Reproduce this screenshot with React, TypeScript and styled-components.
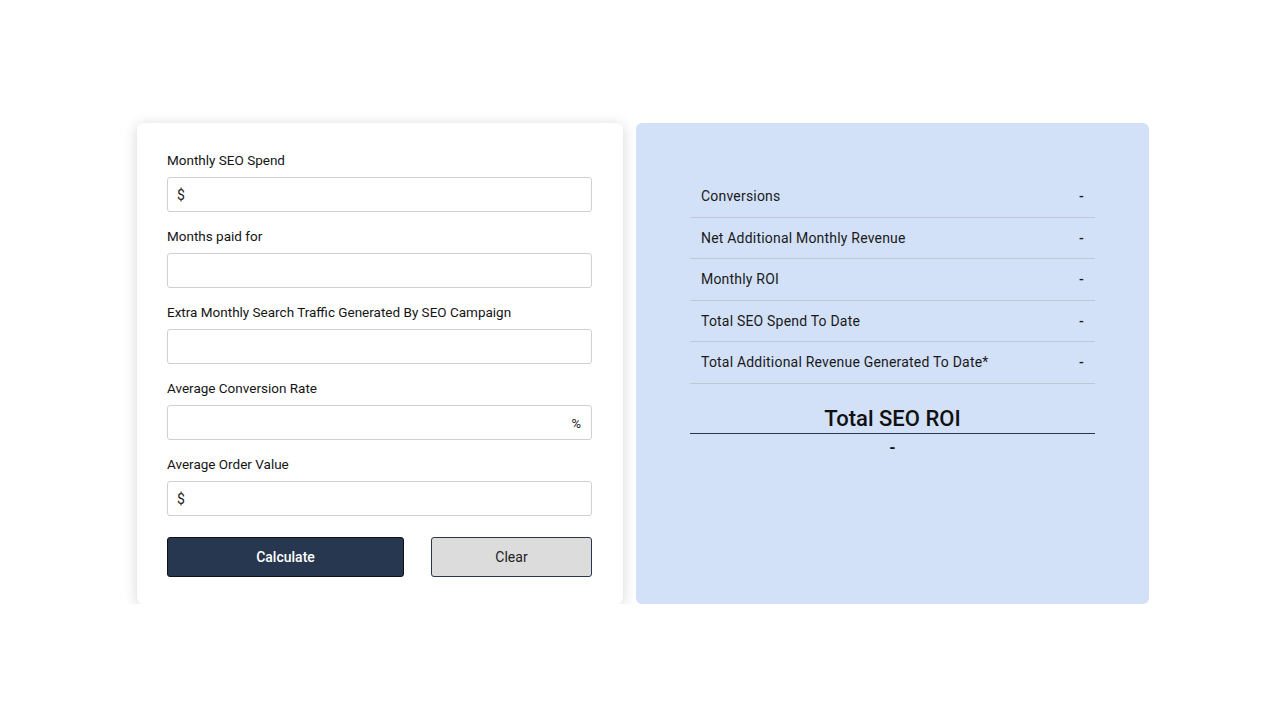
import React from 'react';
import styled, {createGlobalStyle} from 'styled-components';

const GlobalStyle = createGlobalStyle`
    body {
        margin: 0;
        background: #fff;
        font-family: Roboto, "Liberation Sans", sans-serif;
        color: #111;
    }
`

const fields = [
    {label: 'Monthly SEO Spend', prefix: '$'},
    {label: 'Months paid for'},
    {label: 'Extra Monthly Search Traffic Generated By SEO Campaign'},
    {label: 'Average Conversion Rate', suffix: '%'},
    {label: 'Average Order Value', prefix: '$'},
];

const results = [
    'Conversions',
    'Net Additional Monthly Revenue',
    'Monthly ROI',
    'Total SEO Spend To Date',
    'Total Additional Revenue Generated To Date*',
];

const App = () => {
    return (
        <>
            <GlobalStyle/>
            <StyledPage>
                <StyledForm>
                    {fields.map(f => (
                        <StyledField key={f.label}>
                            <StyledLabel>{f.label}</StyledLabel>
                            <StyledInputWrapper>
                                {f.prefix && <StyledAddon $side='left'>{f.prefix}</StyledAddon>}
                                <StyledInput $hasPrefix={!!f.prefix}/>
                                {f.suffix && <StyledAddon $side='right'>{f.suffix}</StyledAddon>}
                            </StyledInputWrapper>
                        </StyledField>
                    ))}
                    <StyledButtons>
                        <StyledButton type='button' $primary>Calculate</StyledButton>
                        <StyledButton type='button'>Clear</StyledButton>
                    </StyledButtons>
                </StyledForm>
                <StyledResults>
                    <StyledTable>
                        {results.map(r => (
                            <StyledRow key={r}>
                                <span>{r}</span>
                                <StyledValue>-</StyledValue>
                            </StyledRow>
                        ))}
                    </StyledTable>
                    <StyledTotalTitle>Total SEO ROI</StyledTotalTitle>
                    <StyledTotalValue>-</StyledTotalValue>
                </StyledResults>
            </StyledPage>
        </>
    );
};

const StyledPage = styled.div`
    display: flex;
    gap: 13px;
    padding: 123px 0 0 137px;
    align-items: stretch;
`

const StyledForm = styled.form`
    width: 486px;
    box-sizing: border-box;
    padding: 27px 31px 27px 30px;
    background: #fff;
    border-radius: 6px;
    box-shadow: 0 2px 14px rgba(0, 0, 0, 0.17);
`

const StyledField = styled.div`
    display: flex;
    flex-direction: column;
    margin-bottom: 14px;
`

const StyledLabel = styled.label`
    font-size: 13.5px;
    line-height: 20px;
    color: #151515;
    margin-bottom: 7px;
`

const StyledInputWrapper = styled.div`
    position: relative;
`

const StyledInput = styled.input<{$hasPrefix?: boolean}>`
    width: 100%;
    height: 35px;
    box-sizing: border-box;
    border: 1px solid #d0d0d0;
    border-radius: 3px;
    background: #fff;
    padding: 0 ${p => p.$hasPrefix ? '24px' : '10px'};
    font: 14px Roboto, sans-serif;
`

const StyledAddon = styled.span<{$side: 'left' | 'right'}>`
    position: absolute;
    top: 50%;
    transform: translateY(-50%);
    ${p => p.$side === 'left' ? 'left: 10px;' : 'right: 11px;'}
    font-size: ${p => p.$side === 'left' ? '14px' : '13px'};
    color: #222;
`

const StyledButtons = styled.div`
    display: flex;
    justify-content: space-between;
    margin-top: 21px;
`

const StyledButton = styled.button<{$primary?: boolean}>`
    height: 40px;
    width: ${p => p.$primary ? '237px' : '161px'};
    border: 1px solid ${p => p.$primary ? '#111' : '#283750'};
    border-radius: 3px;
    background: ${p => p.$primary ? '#283750' : '#dcdcdc'};
    color: ${p => p.$primary ? '#fff' : '#222'};
    font: ${p => p.$primary ? 500 : 400} 14px Roboto, sans-serif;
    cursor: pointer;
`

const StyledResults = styled.div`
    width: 513px;
    box-sizing: border-box;
    background: #d2e1f8;
    border-radius: 6px;
    padding: 53px 54px;
`

const StyledTable = styled.div`
    display: flex;
    flex-direction: column;
`

const StyledRow = styled.div`
    display: flex;
    justify-content: space-between;
    align-items: center;
    box-sizing: border-box;
    height: 41.5px;
    padding: 0 11px;
    border-bottom: 1px solid #c2c8d2;
    font-size: 14px;
    letter-spacing: 0.2px;
    color: #1a1a1a;
`

const StyledValue = styled.span`
    font-weight: 500;
`

const StyledTotalTitle = styled.div`
    margin-top: 20px;
    text-align: center;
    font-size: 22px;
    font-weight: 500;
    line-height: 29px;
    border-bottom: 1px solid #283750;
    color: #111;
`

const StyledTotalValue = styled.div`
    text-align: center;
    font-size: 16px;
    font-weight: 700;
    line-height: 24px;
    margin-top: 2px;
`

export default App;
